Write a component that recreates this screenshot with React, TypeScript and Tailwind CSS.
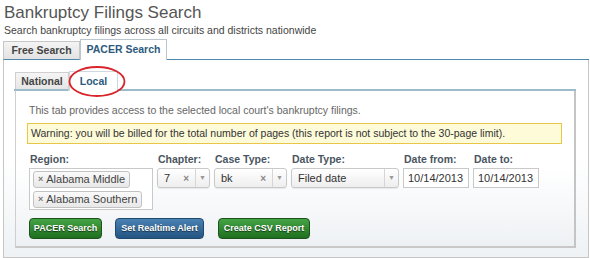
import React from "react";

const labelCls = "text-[10.5px] font-bold leading-[12px] text-[#4a5561] mb-[3px] pl-[1px]";
const btnText = "text-[9px] font-bold text-white [text-shadow:0_1px_1px_rgba(0,0,0,0.6)]";

function Select({ width, value, clear }: { width: string; value: string; clear?: boolean }) {
  return (
    <div className={`${width} h-[20px] flex items-center rounded-[3px] border border-[#c9c9c9] bg-gradient-to-b from-white to-[#eeeeee] text-[11px] text-[#333] shadow-[0_1px_1px_rgba(0,0,0,0.08)]`}>
      <span className="flex-1 pl-[6px] truncate">{value}</span>
      {clear && <span className="pr-[6px] text-[10px] font-bold text-[#888]">×</span>}
      <span className="w-[14px] h-full flex items-center justify-center border-l border-[#d6d6d6] text-[7px] text-[#999]">▼</span>
    </div>
  );
}

function Tag({ text }: { text: string }) {
  return (
    <div className="inline-flex items-center h-[17px] rounded-[3px] border border-[#c2c2c2] bg-gradient-to-b from-[#fafafa] to-[#e8e8e8] px-[4px] text-[11px] text-[#444]">
      <span className="mr-[3px] text-[9px] font-bold text-[#777]">×</span>
      {text}
    </div>
  );
}

export default function App() {
  return (
    <div className="w-[590px] h-[258px] overflow-hidden bg-white font-['Liberation_Sans',Arial,sans-serif] pl-[3px] pr-[1px]">
      <h1 className="pl-[1px] pt-[3px] text-[17px] leading-[20px] text-[#555]">Bankruptcy Filings Search</h1>
      <p className="pl-[1px] mt-[1px] text-[10.5px] leading-[13px] text-[#444]">
        Search bankruptcy filings across all circuits and districts nationwide
      </p>

      {/* outer tabs */}
      <div className="mt-[2px] flex items-end h-[21px]">
        <div className="w-[77px] h-[19px] flex items-center justify-center border border-[#c6c6c6] border-b-[#4d87ab] bg-gradient-to-b from-[#f4f4f4] to-[#e2e2e2] text-[10.5px] font-bold text-[#444]">
          Free Search
        </div>
        <div className="w-[87px] h-[21px] flex items-center justify-center border border-b-0 border-[#b9c6ce] bg-white text-[10.5px] font-bold text-[#2c5a7c]">
          PACER Search
        </div>
        <div className="flex-1 h-px bg-[#4d87ab]" />
      </div>

      {/* outer panel */}
      <div className="h-[198px] border-x border-b border-[#c6c6c6] bg-gradient-to-b from-white via-white to-[#eef2f5] pl-[11px] pr-[12px] pt-[11px]">
        {/* inner tabs */}
        <div className="relative flex items-end h-[20px]">
          <div className="w-[54px] h-[19px] flex items-center justify-center border border-[#cfcfcf] border-b-0 bg-gradient-to-b from-[#f5f5f5] to-[#e4e4e4] text-[10.5px] font-bold text-[#444]">
            National
          </div>
          <div className="w-[49px] h-[20px] flex items-center justify-center border border-b-0 border-[#cfd8dd] bg-white text-[10.5px] font-bold text-[#2c5a7c]">
            Local
          </div>
          <div className="flex-1 h-[2px] bg-[#9cbccc]" />
          <div className="absolute left-[-1px] bottom-0 w-[54px] h-[2px] bg-[#9cbccc]" />
          <svg className="absolute left-[52px] top-[-6px]" width="60" height="34" viewBox="0 0 60 34">
            <ellipse cx="30" cy="16.5" rx="27.5" ry="14.5" fill="none" stroke="#d8242a" strokeWidth="1.8" />
          </svg>
        </div>

        {/* inner panel */}
        <div className="h-[157px] border-l border-[#cfcfcf] border-r-2 border-r-[#c4c4c4] border-b-2 border-b-[#c8c8c8] bg-gradient-to-b from-white via-white to-[#eef1f4] pl-[13px] pr-[12px] pt-[13px]">
          <p className="text-[10.5px] leading-[13px] text-[#666]">
            This tab provides access to the selected local court's bankruptcy filings.
          </p>
          <div className="-ml-[2px] mt-[6px] h-[21px] flex items-center border border-[#e8c64a] bg-[#fefbd8] pl-[3px] text-[10.5px] text-[#333]">
            Warning: you will be billed for the total number of pages (this report is not subject to the 30-page limit).
          </div>

          {/* filters */}
          <div className="mt-[9px] flex gap-[4px]">
            <div className="w-[124px]">
              <div className={labelCls}>Region:</div>
              <div className="h-[42px] border border-[#c9c9c9] bg-white pl-[3px] pt-[2px] flex flex-col items-start gap-[3px]">
                <Tag text="Alabama Middle" />
                <Tag text="Alabama Southern" />
              </div>
            </div>
            <div className="w-[53px]">
              <div className={labelCls}>Chapter:</div>
              <Select width="w-[53px]" value="7" clear />
            </div>
            <div className="w-[73px]">
              <div className={labelCls}>Case Type:</div>
              <Select width="w-[73px]" value="bk" clear />
            </div>
            <div className="w-[108px]">
              <div className={labelCls}>Date Type:</div>
              <Select width="w-[108px]" value="Filed date" />
            </div>
            <div className="w-[66px]">
              <div className={labelCls}>Date from:</div>
              <div className="h-[20px] flex items-center border border-[#c9c9c9] bg-white pl-[4px] text-[11px] text-[#333]">10/14/2013</div>
            </div>
            <div className="w-[66px]">
              <div className={labelCls}>Date to:</div>
              <div className="h-[20px] flex items-center border border-[#c9c9c9] bg-white pl-[4px] text-[11px] text-[#333]">10/14/2013</div>
            </div>
          </div>

          {/* buttons */}
          <div className="mt-[8px] flex">
            <button className={`w-[73px] h-[21px] rounded-[4px] border border-[#1c521c] bg-gradient-to-b from-[#45a345] to-[#1f6f1f] ${btnText}`}>
              PACER Search
            </button>
            <button className={`ml-[13px] w-[89px] h-[21px] rounded-[4px] border border-[#1f4a70] bg-gradient-to-b from-[#4a82b3] to-[#245583] ${btnText}`}>
              Set Realtime Alert
            </button>
            <button className={`ml-[14px] w-[92px] h-[21px] rounded-[4px] border border-[#1c521c] bg-gradient-to-b from-[#45a345] to-[#1f6f1f] ${btnText}`}>
              Create CSV Report
            </button>
          </div>
        </div>
      </div>
    </div>
  );
}
